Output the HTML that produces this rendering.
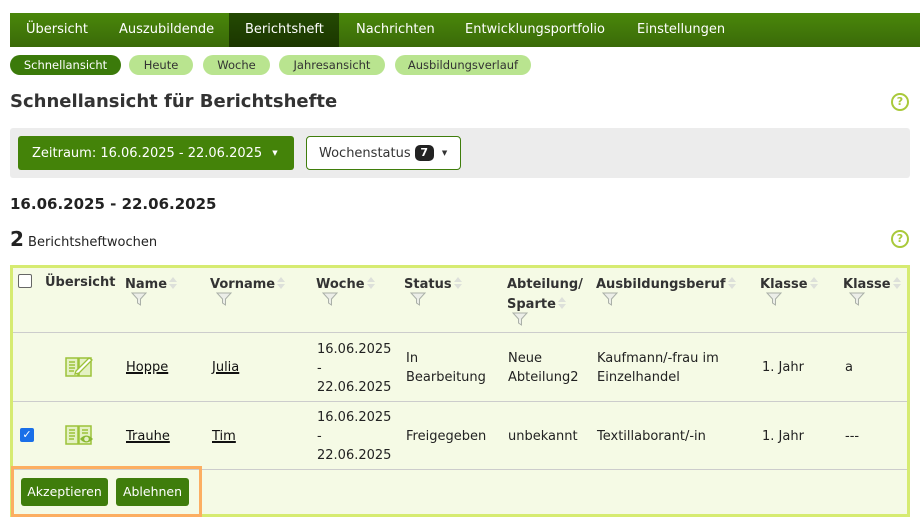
<!DOCTYPE html>
<html><head><meta charset="utf-8"><style>
*{margin:0;padding:0;box-sizing:border-box}
body{width:920px;height:528px;background:#fff;font-family:"DejaVu Sans","Liberation Sans",sans-serif;font-size:13px;color:#222;position:relative;overflow:hidden}
.a{position:absolute;white-space:nowrap}
.nav{position:absolute;left:10px;top:13px;width:910px;height:34px;background:linear-gradient(#4a870b,#3a6a08)}
.nav span{position:absolute;top:9px;color:#fff;font-size:13px;line-height:16px}
.act{position:absolute;left:219px;top:0;width:110px;height:34px;background:linear-gradient(#244a03,#1b3600)}
.pill{position:absolute;top:55px;height:20px;border-radius:10px;background:#b9e48f;color:#333;font-size:11.5px;text-align:center;line-height:20px}
.help{position:absolute;width:18px;height:18px;border:2px solid #a9c93a;border-radius:50%;color:#a9c93a;font-weight:bold;font-size:11px;text-align:center;line-height:14px}
.th{position:absolute;top:275px;font-weight:bold;color:#333}
.srt{display:inline-block;width:10px;height:16px;vertical-align:-3px;margin-left:1px}
.fil{position:absolute;width:16px;height:16px}
.td{position:absolute;color:#222;line-height:19px}
u{text-decoration:underline;text-decoration-thickness:1.5px;color:#111}
.btn{position:absolute;top:478px;height:28px;background:#3f7d0b;color:#fff;border-radius:3px;line-height:28px;text-align:center;font-size:12.5px}
</style></head><body>
<div class="nav"><div class="act"></div>
<span style="left:16px">Übersicht</span><span style="left:109px">Auszubildende</span><span style="left:235px">Berichtsheft</span><span style="left:346px">Nachrichten</span><span style="left:455px">Entwicklungsportfolio</span><span style="left:627px">Einstellungen</span></div>

<div class="pill" style="left:10px;width:111px;background:#3b7a0a;color:#fff">Schnellansicht</div>
<div class="pill" style="left:129px;width:64px">Heute</div>
<div class="pill" style="left:203px;width:67px">Woche</div>
<div class="pill" style="left:279px;width:106px">Jahresansicht</div>
<div class="pill" style="left:395px;width:136px">Ausbildungsverlauf</div>

<div class="a" style="left:10px;top:91px;font-size:18px;font-weight:bold;color:#333">Schnellansicht für Berichtshefte</div>
<div class="help" style="left:891px;top:93px">?</div>

<div class="a" style="left:10px;top:128px;width:900px;height:50px;background:#ececec;border-radius:3px"></div>
<div class="a" style="left:18px;top:136px;width:276px;height:34px;background:#448309;border-radius:3px;color:#fff;line-height:34px;padding-left:14px">Zeitraum: 16.06.2025 - 22.06.2025 <span style="font-size:7px;margin-left:6px;vertical-align:2px">▼</span></div>
<div class="a" style="left:306px;top:136px;width:155px;height:34px;background:#fff;border:1px solid #3f7d0b;border-radius:4px;line-height:32px;padding-left:12px;color:#333">Wochenstatus <span style="display:inline-block;background:#222;color:#fff;font-weight:bold;font-size:11px;border-radius:5px;width:19px;height:16px;line-height:16px;text-align:center;vertical-align:1px">7</span> <span style="font-size:7px;margin-left:4px;vertical-align:2px">▼</span></div>

<div class="a" style="left:10px;top:195px;font-size:15px;font-weight:bold;color:#222">16.06.2025 - 22.06.2025</div>
<div class="a" style="left:10px;top:227px;color:#222"><b style="font-size:20px">2</b> Berichtsheftwochen</div>
<div class="help" style="left:891px;top:230px">?</div>

<div class="a" style="left:10px;top:265px;width:900px;height:252px;background:#f5fae5;border:3px solid #d6eb71"></div>
<div class="a" style="left:13px;top:332px;width:894px;height:1px;background:#ccc"></div>
<div class="a" style="left:13px;top:401px;width:894px;height:1px;background:#ccc"></div>
<div class="a" style="left:13px;top:469px;width:894px;height:1px;background:#ccc"></div>

<div class="a" style="left:18px;top:274px;width:14px;height:14px;border:1px solid #666;border-radius:2px;background:#fff"></div>
<svg width="0" height="0" style="position:absolute"><defs>
<symbol id="s" viewBox="0 0 10 16"><path d="M1 7L5 2L9 7Z M1 9L5 14L9 9Z" fill="#dde0da"/></symbol>
<symbol id="f" viewBox="0 0 16 16"><path d="M1 2H15L9.5 8V14L6.5 12V8Z" fill="#eceee8" stroke="#aab0a8" stroke-width="1"/></symbol>
</defs></svg>
<div class="th" style="left:45px">Übersicht</div>
<div class="th" style="left:125px">Name<svg class="srt"><use href="#s"/></svg></div>
<svg class="fil" style="left:131px;top:291px"><use href="#f"/></svg>
<div class="th" style="left:210px">Vorname<svg class="srt"><use href="#s"/></svg></div>
<svg class="fil" style="left:216px;top:291px"><use href="#f"/></svg>
<div class="th" style="left:316px">Woche<svg class="srt"><use href="#s"/></svg></div>
<svg class="fil" style="left:322px;top:291px"><use href="#f"/></svg>
<div class="th" style="left:404px">Status<svg class="srt"><use href="#s"/></svg></div>
<svg class="fil" style="left:410px;top:291px"><use href="#f"/></svg>
<div class="th" style="left:507px;top:275px;line-height:20px">Abteilung/<br>Sparte<svg class="srt"><use href="#s"/></svg></div>
<svg class="fil" style="left:512px;top:311px"><use href="#f"/></svg>
<div class="th" style="left:596px">Ausbildungsberuf<svg class="srt"><use href="#s"/></svg></div>
<svg class="fil" style="left:602px;top:291px"><use href="#f"/></svg>
<div class="th" style="left:760px">Klasse<svg class="srt"><use href="#s"/></svg></div>
<svg class="fil" style="left:766px;top:291px"><use href="#f"/></svg>
<div class="th" style="left:843px">Klasse<svg class="srt"><use href="#s"/></svg></div>
<svg class="fil" style="left:849px;top:291px"><use href="#f"/></svg>

<!-- row 1 -->
<svg class="a" style="left:65px;top:356px" width="28" height="22" viewBox="0 0 28 22"><path d="M1 2H13V20H1Z M14 2H26V20H14Z" fill="#e4f1c4" stroke="#9cc23a" stroke-width="1.5"/><path d="M4 6H10M4 9H10M4 12H10M4 15H9" stroke="#9cc23a" stroke-width="1.5"/><path d="M11 15L24 2L27 4L14 17L10 18Z" fill="#fff" stroke="#9cc23a" stroke-width="1.3"/></svg>
<div class="td" style="left:126px;top:358px"><u>Hoppe</u></div>
<div class="td" style="left:212px;top:358px"><u>Julia</u></div>
<div class="td" style="left:317px;top:340px">16.06.2025<br>-<br>22.06.2025</div>
<div class="td" style="left:406px;top:349px">In<br>Bearbeitung</div>
<div class="td" style="left:508px;top:349px">Neue<br>Abteilung2</div>
<div class="td" style="left:597px;top:349px">Kaufmann/-frau im<br>Einzelhandel</div>
<div class="td" style="left:762px;top:358px">1. Jahr</div>
<div class="td" style="left:845px;top:358px">a</div>

<!-- row 2 -->
<div class="a" style="left:20px;top:428px;width:14px;height:14px;background:#1a6fe8;border-radius:2px;color:#fff;font-size:11px;line-height:14px;text-align:center;font-weight:bold">✓</div>
<svg class="a" style="left:65px;top:424px" width="30" height="22" viewBox="0 0 30 22"><path d="M1 2H13V20H1Z M14 2H26V20H14Z" fill="#e4f1c4" stroke="#9cc23a" stroke-width="1.5"/><path d="M4 6H10M4 9H10M4 12H10M4 15H9M17 6H23M17 9H23" stroke="#9cc23a" stroke-width="1.5"/><path d="M15 15Q21 8 28 15Q21 22 15 15Z" fill="#8ab832"/><circle cx="21.5" cy="15" r="2.3" fill="#e4f1c4"/></svg>
<div class="td" style="left:126px;top:427px"><u>Trauhe</u></div>
<div class="td" style="left:212px;top:427px"><u>Tim</u></div>
<div class="td" style="left:317px;top:408px">16.06.2025<br>-<br>22.06.2025</div>
<div class="td" style="left:406px;top:427px">Freigegeben</div>
<div class="td" style="left:508px;top:427px">unbekannt</div>
<div class="td" style="left:597px;top:427px">Textillaborant/-in</div>
<div class="td" style="left:762px;top:427px">1. Jahr</div>
<div class="td" style="left:845px;top:427px">---</div>

<div class="a" style="left:11px;top:466px;width:191px;height:51px;border:3px solid #fcae62"></div>
<div class="btn" style="left:21px;width:87px">Akzeptieren</div>
<div class="btn" style="left:116px;width:73px">Ablehnen</div>
</body></html>
